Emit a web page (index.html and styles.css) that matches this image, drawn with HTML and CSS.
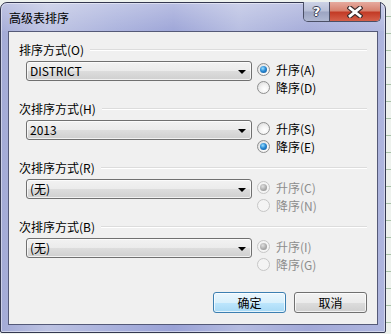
FILE: index.html
```html
<!DOCTYPE html>
<html lang="zh-CN">
<head>
  <meta charset="UTF-8">
  <title>高级表排序</title>
  <link rel="stylesheet" href="styles.css">
</head>
<body>
  <div class="window">
    <div class="titlebar">
      <span class="title">高级表排序</span>
      <div class="caption-buttons">
        <div class="cap-btn help">?</div>
        <div class="cap-btn close">
          <svg width="16" height="12" viewBox="0 0 16 12">
            <path d="M3 2 L13 10 M13 2 L3 10" stroke="#3a2a2a" stroke-width="5" stroke-linecap="square" fill="none"/>
            <path d="M3 2 L13 10 M13 2 L3 10" stroke="#fff" stroke-width="2.8" stroke-linecap="square" fill="none"/>
          </svg>
        </div>
      </div>
    </div>

    <div class="client">
      <div class="group">
        <div class="group-label"><span>排序方式(O)</span><i class="rule"></i></div>
        <div class="group-row">
          <div class="combo"><span>DISTRICT</span><i class="arrow"></i></div>
          <div class="options">
            <div class="option"><span class="radio checked"></span>升序(A)</div>
            <div class="option"><span class="radio"></span>降序(D)</div>
          </div>
        </div>
      </div>

      <div class="group">
        <div class="group-label"><span>次排序方式(H)</span><i class="rule"></i></div>
        <div class="group-row">
          <div class="combo"><span>2013</span><i class="arrow"></i></div>
          <div class="options">
            <div class="option"><span class="radio"></span>升序(S)</div>
            <div class="option"><span class="radio checked"></span>降序(E)</div>
          </div>
        </div>
      </div>

      <div class="group">
        <div class="group-label"><span>次排序方式(R)</span><i class="rule"></i></div>
        <div class="group-row">
          <div class="combo"><span>(无)</span><i class="arrow"></i></div>
          <div class="options disabled">
            <div class="option"><span class="radio checked"></span>升序(C)</div>
            <div class="option"><span class="radio"></span>降序(N)</div>
          </div>
        </div>
      </div>

      <div class="group">
        <div class="group-label"><span>次排序方式(B)</span><i class="rule"></i></div>
        <div class="group-row">
          <div class="combo"><span>(无)</span><i class="arrow"></i></div>
          <div class="options disabled">
            <div class="option"><span class="radio checked"></span>升序(I)</div>
            <div class="option"><span class="radio"></span>降序(G)</div>
          </div>
        </div>
      </div>

      <div class="buttons">
        <div class="btn default">确定</div>
        <div class="btn">取消</div>
      </div>
    </div>
  </div>
</body>
</html>
```

FILE: styles.css
```css
body {
  margin: 0;
  background-color: #eef2ee;
  background-image: repeating-linear-gradient(to bottom, transparent 0, transparent 16px, #a9c2a9 16px, #a9c2a9 17px);
  font-family: "Noto Sans CJK SC", sans-serif;
  font-size: 12px;
  color: #000;
}
.window {
  box-sizing: border-box;
  width: 386px;
  height: 331px;
  margin-top: 2px;
  border: 1px solid #343850;
  border-radius: 7px 7px 2px 2px;
  background: linear-gradient(to right, #a3aad6 0%, #bcc2e2 12%, #a8b0dc 30%, #9aa2d6 45%, #b4bbe0 62%, #a2a9d8 80%, #aeb5de 100%);
  box-shadow: inset 0 0 0 1px rgba(255, 255, 255, 0.45);
}
.titlebar {
  display: flex;
  height: 28px;
  padding-left: 8px;
  background: linear-gradient(to bottom, rgba(255, 255, 255, 0.3), rgba(255, 255, 255, 0.05));
  border-radius: 6px 6px 0 0;
}
.title {
  flex: 1;
  line-height: 29px;
  font-size: 12px;
}
.caption-buttons {
  display: flex;
  margin: -1px 4px 0 0;
  height: 19px;
  border: 1px solid #4a4f66;
  border-top: none;
  border-radius: 0 0 5px 5px;
  overflow: hidden;
}
.cap-btn {
  display: flex;
  align-items: center;
  justify-content: center;
  height: 19px;
}
.help {
  width: 25px;
  border-right: 1px solid #4a4f66;
  background: linear-gradient(to bottom, #cdd3e6 0%, #b7bed6 48%, #9ca4c2 52%, #b0b8d2 100%);
  color: #fff;
  font-family: "DejaVu Sans", sans-serif;
  font-weight: bold;
  font-size: 13px;
  line-height: 19px;
  text-shadow: 1px 0 #3a3f55, -1px 0 #3a3f55, 0 1px #3a3f55, 0 -1px #3a3f55;
}
.close {
  width: 50px;
  background: linear-gradient(to bottom, #e6aa9e 0%, #d7826f 45%, #c33b26 55%, #d5604a 100%);
}
.client {
  box-sizing: border-box;
  display: flex;
  flex-direction: column;
  height: 294px;
  margin: 0 7px;
  padding: 11px 10px;
  background-color: #f0f0f0;
  border: 1px solid #555a78;
}
.group {
  height: 53px;
  margin-bottom: 6px;
}
.group-label {
  display: flex;
  align-items: center;
  height: 14px;
  line-height: 14px;
}
.rule {
  flex: 1;
  margin-left: 6px;
  border-top: 1px solid #dcdcdc;
  border-bottom: 1px solid #ffffff;
}
.group-row {
  display: flex;
  margin-top: 3px;
}
.combo {
  box-sizing: border-box;
  display: flex;
  align-items: center;
  width: 226px;
  height: 20px;
  margin: 1px 0 0 7px;
  padding: 0 5px 0 3px;
  border: 1px solid #707070;
  border-radius: 3px;
  background: linear-gradient(to bottom, #f2f2f2 0%, #ebebeb 50%, #dddddd 50%, #cfcfcf 100%);
  box-shadow: inset 0 0 0 1px rgba(255, 255, 255, 0.7);
}
.combo span {
  flex: 1;
  line-height: 18px;
}
.arrow {
  width: 0;
  height: 0;
  border-left: 4px solid transparent;
  border-right: 4px solid transparent;
  border-top: 4px solid #000;
  margin-top: 1px;
}
.options {
  margin-left: 5px;
}
.option {
  display: flex;
  align-items: center;
  height: 18px;
}
.radio {
  position: relative;
  box-sizing: border-box;
  width: 13px;
  height: 13px;
  margin-right: 6px;
  border: 1px solid #8e8f8f;
  border-radius: 50%;
  background: radial-gradient(circle at 60% 65%, #ffffff 0%, #f4f4f4 40%, #d4d4d4 100%);
}
.radio.checked::after {
  content: "";
  position: absolute;
  left: 2px;
  top: 2px;
  width: 7px;
  height: 7px;
  border-radius: 50%;
  background: radial-gradient(circle at 40% 35%, #9ce0ff 0%, #2a8ad4 45%, #0d4f8f 100%);
}
.options.disabled {
  color: #8d8d8d;
}
.options.disabled .radio {
  border-color: #c6c6c6;
  background: #f4f4f4;
}
.options.disabled .radio.checked::after {
  background: radial-gradient(circle at 40% 35%, #e0e0e0 0%, #a8a8a8 60%, #8a8a8a 100%);
}
.buttons {
  display: flex;
  justify-content: flex-end;
  gap: 8px;
  margin-top: auto;
}
.btn {
  box-sizing: border-box;
  width: 73px;
  height: 21px;
  line-height: 19px;
  text-align: center;
  border: 1px solid #707070;
  border-radius: 3px;
  background: linear-gradient(to bottom, #f2f2f2 0%, #ebebeb 50%, #dddddd 50%, #cfcfcf 100%);
  box-shadow: inset 0 0 0 1px rgba(255, 255, 255, 0.7);
}
.btn.default {
  border-color: #3c7fb1;
  background: linear-gradient(to bottom, #eaf6fd 0%, #d9f0fc 50%, #bee6fd 50%, #a7d9f5 100%);
}
```
